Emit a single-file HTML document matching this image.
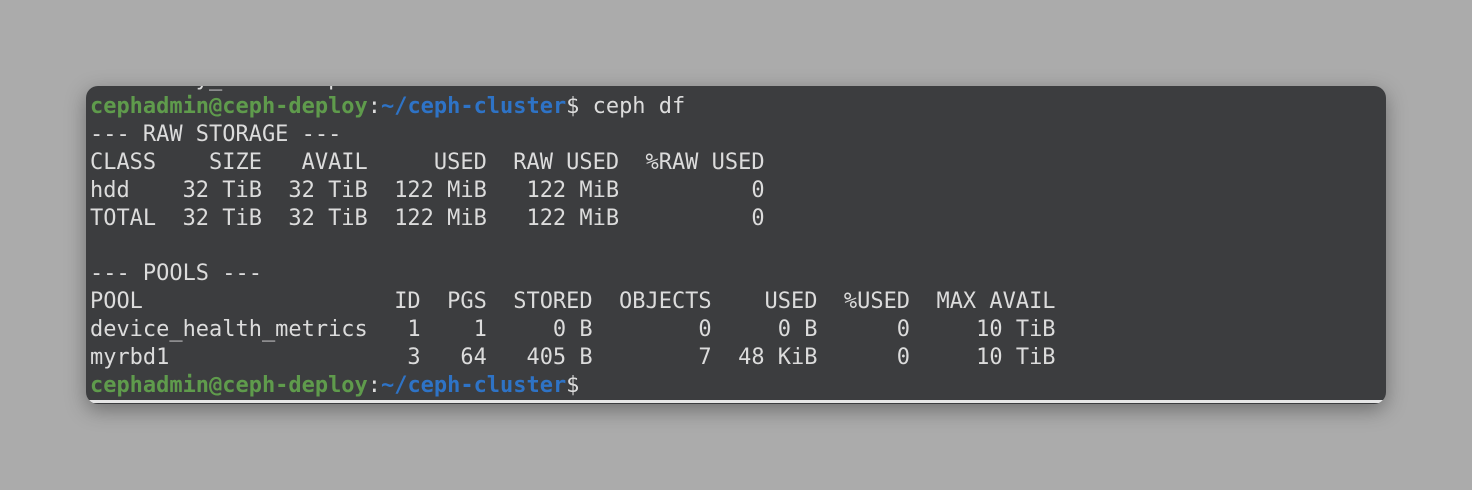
<!DOCTYPE html>
<html><head><meta charset="utf-8"><style>
html,body{margin:0;padding:0;}
body{width:1472px;height:490px;background:#ababab;position:relative;overflow:hidden;}
.win{position:absolute;left:86px;top:86px;width:1300px;height:318px;background:#3c3d3f;border-radius:12px;overflow:hidden;box-shadow:0 6px 20px rgba(0,0,0,0.35);}
.bl{position:absolute;left:0;right:0;bottom:1px;height:3px;background:#e6e6e6;}
pre{position:absolute;left:4px;top:-21px;margin:0;font-family:"DejaVu Sans Mono","Liberation Mono",monospace;font-size:21.97px;line-height:27.9px;color:#dcdcdc;}
.g{color:#5f9b4c;font-weight:bold;}
.b{color:#2e73c6;font-weight:bold;}
</style></head><body>
<div class="win"><pre>     ...y_  .  .  p  .  .  .  .  .  .  .  .
<span class="g">cephadmin@ceph-deploy</span>:<span class="b">~/ceph-cluster</span>$ ceph df
--- RAW STORAGE ---
CLASS    SIZE   AVAIL     USED  RAW USED  %RAW USED
hdd    32 TiB  32 TiB  122 MiB   122 MiB          0
TOTAL  32 TiB  32 TiB  122 MiB   122 MiB          0

--- POOLS ---
POOL                   ID  PGS  STORED  OBJECTS    USED  %USED  MAX AVAIL
device_health_metrics   1    1     0 B        0     0 B      0     10 TiB
myrbd1                  3   64   405 B        7  48 KiB      0     10 TiB
<span class="g">cephadmin@ceph-deploy</span>:<span class="b">~/ceph-cluster</span>$</pre><div class="bl"></div></div>
</body></html>
